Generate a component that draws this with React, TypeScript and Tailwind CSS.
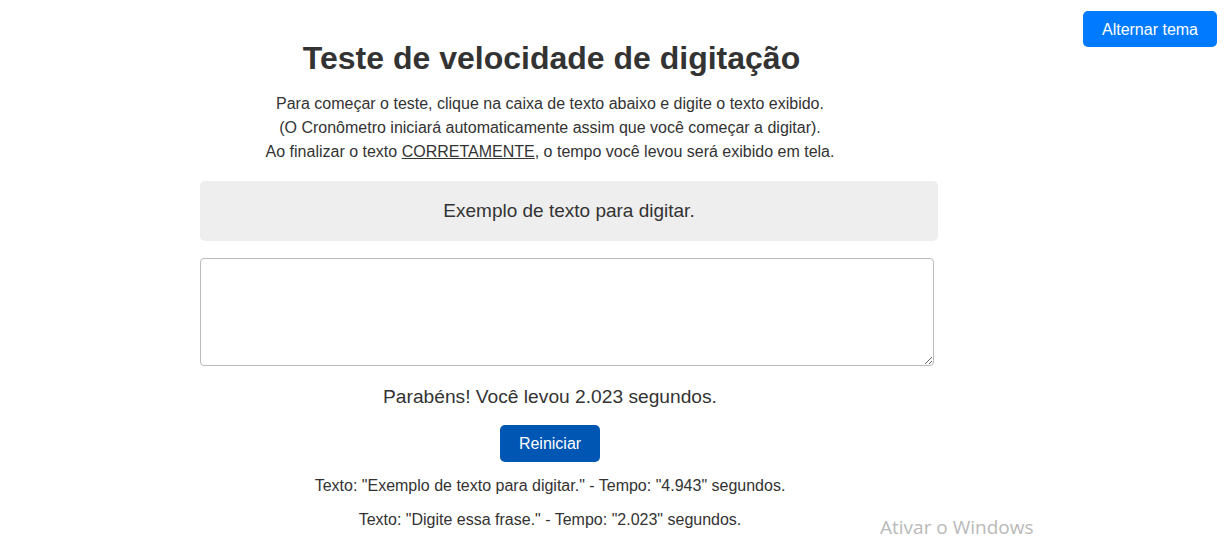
import React from "react";

export default function App() {
  return (
    <div className="relative w-full h-[538px] bg-white text-[#333333] overflow-hidden" style={{ fontFamily: '"Liberation Sans", Arial, sans-serif' }}>
      <button className="absolute top-[11px] right-[11px] w-[134px] h-[36px] pt-[2px] bg-[#007bff] text-white text-[16px] rounded-[5px] flex items-center justify-center">
        Alternar tema
      </button>

      <div className="ml-[200px] w-[700px] flex flex-col items-center">
        <h1 className="mt-[40px] h-[37px] leading-[37px] text-[32px] font-bold text-center pl-[3px]">
          Teste de velocidade de digitação
        </h1>
        <p className="mt-[15px] text-[16px] leading-[24px] text-center whitespace-nowrap">
          Para começar o teste, clique na caixa de texto abaixo e digite o texto exibido.
          <br />
          (O Cronômetro iniciará automaticamente assim que você começar a digitar).
          <br />
          Ao finalizar o texto <span className="underline">CORRETAMENTE</span>, o tempo você levou será exibido em tela.
        </p>
        <div className="mt-[17px] self-start w-[738px] h-[60px] bg-[#eeeeee] rounded-[5px] flex items-center justify-center text-[19px]">
          Exemplo de texto para digitar.
        </div>
        <textarea className="mt-[17px] self-start w-[734px] h-[108px] border border-[#bbbbbb] rounded-[4px] p-[16px] text-[16px] outline-none" />
        <div className="mt-[20px] h-[22px] leading-[22px] text-[19.2px] text-center whitespace-nowrap">
          Parabéns! Você levou 2.023 segundos.
        </div>
        <button className="mt-[17px] w-[100px] h-[37px] bg-[#0056b3] text-white text-[16px] rounded-[5px] flex items-center justify-center">
          Reiniciar
        </button>
        <p className="mt-[15px] text-[16px] leading-[18px] text-center whitespace-nowrap">
          Texto: "Exemplo de texto para digitar." - Tempo: "4.943" segundos.
        </p>
        <p className="mt-[16px] text-[16px] leading-[18px] text-center whitespace-nowrap">
          Texto: "Digite essa frase." - Tempo: "2.023" segundos.
        </p>
      </div>

      <div className="absolute left-[880px] top-[517px] text-[19px] leading-[20px] text-[#b9b9b9] whitespace-nowrap" style={{ fontFamily: '"Open Sans", "Noto Sans", sans-serif' }}>
        Ativar o Windows
      </div>
    </div>
  );
}
